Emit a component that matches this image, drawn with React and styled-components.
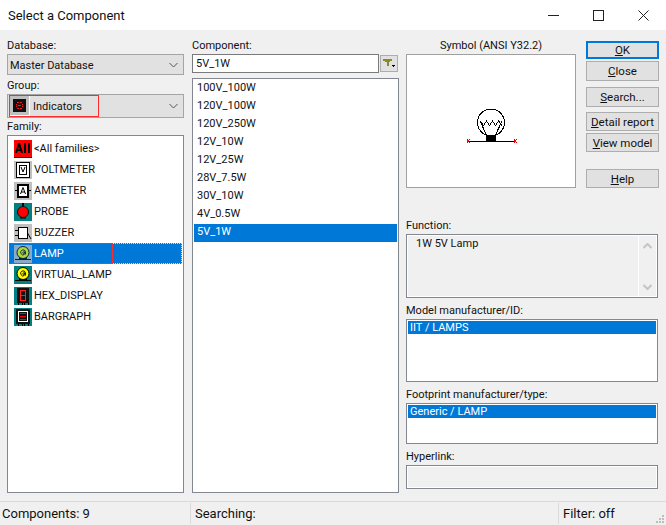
import React from 'react';
import styled, { createGlobalStyle } from 'styled-components';

const GlobalStyle = createGlobalStyle`
    html, body {
        margin: 0;
        padding: 0;
        background: #f0f0f0;
    }
    * {
        box-sizing: border-box;
    }
`;

const Dialog = styled.div`
    width: 666px;
    height: 525px;
    display: flex;
    flex-direction: column;
    overflow: hidden;
    background: #f0f0f0;
    color: #111;
    font-family: Roboto, "Liberation Sans", sans-serif;
    font-size: 11px;
`;

const TitleBar = styled.div`
    height: 30px;
    flex: none;
    display: flex;
    align-items: center;
    justify-content: space-between;
    background: #fff;
    padding-left: 8px;
    font-size: 13px;
`;

const WindowControls = styled.div`
    display: flex;
    height: 30px;
`;

const WindowControl = styled.div`
    width: 45px;
    display: flex;
    align-items: center;
    justify-content: center;
`;

const Body = styled.div`
    flex: 1;
    display: flex;
    padding: 8px 0 0 7px;
`;

const LeftColumn = styled.div`
    width: 177px;
    margin-right: 8px;
    display: flex;
    flex-direction: column;
    padding-bottom: 8px;
`;

const MiddleColumn = styled.div`
    width: 207px;
    margin-right: 7px;
    display: flex;
    flex-direction: column;
    padding-bottom: 8px;
`;

const RightColumn = styled.div`
    width: 253px;
    display: flex;
    flex-direction: column;
`;

const Label = styled.div`
    height: 14px;
    line-height: 16px;
    margin-top: ${(p) => p.$top || 0}px;
    margin-bottom: 2px;
    white-space: nowrap;
    text-align: ${(p) => (p.$center ? 'center' : 'left')};
`;

const Select = styled.div`
    position: relative;
    height: ${(p) => p.$height}px;
    display: flex;
    align-items: center;
    justify-content: space-between;
    flex: none;
    background: #e1e1e1;
    border: 1px solid #a5a5a5;
    padding: 0 5px 0 2px;
`;

const SelectValue = styled.div`
    display: flex;
    align-items: center;
    gap: 3px;
    padding-top: 1px;
`;

const GroupIcon = styled.div`
    width: 20px;
    height: 20px;
    margin-top: -1px;
    display: flex;
    border: 1px solid #fff;
    border-width: 0 1px 1px 0;
`;

const Highlight = styled.div`
    position: absolute;
    z-index: 1;
    left: ${(p) => p.$left}px;
    top: ${(p) => p.$top}px;
    width: ${(p) => p.$width}px;
    height: ${(p) => p.$height}px;
    border: 1px solid #ff2a2a;
    pointer-events: none;
`;

const ListBox = styled.div`
    position: relative;
    flex: 1;
    background: #fff;
    border: 1px solid #828790;
    padding: ${(p) => p.$padTop || 1}px 1px 1px;
`;

const FamilyRow = styled.div`
    position: relative;
    z-index: 0;
    height: 21px;
    display: flex;
    align-items: center;
    padding-left: 5px;
    gap: 2px;
    background: ${(p) => (p.$selected ? '#0078d7' : 'transparent')};
    color: ${(p) => (p.$selected ? '#fff' : '#111')};
    outline: ${(p) => (p.$selected ? '1px dotted #c8e0f4' : 'none')};
    outline-offset: -1px;
`;

const IconSlot = styled.div`
    width: 18px;
    height: 18px;
    flex: none;
    display: flex;
    opacity: ${(p) => (p.$selected ? 0.7 : 1)};
`;

const ComponentRow = styled.div`
    height: 18px;
    line-height: 16px;
    padding-left: 3px;
    background: ${(p) => (p.$selected ? '#0078d7' : 'transparent')};
    color: ${(p) => (p.$selected ? '#fff' : '#111')};
`;

const SearchRow = styled.div`
    display: flex;
    align-items: center;
    gap: 1px;
    height: 19px;
    margin-bottom: 5px;
`;

const SearchInput = styled.div`
    width: 187px;
    height: 19px;
    line-height: 17px;
    background: #fff;
    border: 1px solid #7a7a7a;
    padding-left: 3px;
`;

const FilterButton = styled.div`
    width: 18px;
    height: 17px;
    background: #e1e1e1;
    border: 1px solid #adadad;
    display: flex;
    align-items: center;
    justify-content: center;
`;

const TopRow = styled.div`
    display: flex;
    justify-content: space-between;
    height: 150px;
    margin-bottom: 30px;
`;

const SymbolColumn = styled.div`
    width: 170px;
    display: flex;
    flex-direction: column;
`;

const SymbolBox = styled.div`
    height: 134px;
    background: #fff;
    border: 1px solid #a0a0a0;
`;

const ButtonColumn = styled.div`
    width: 73px;
    margin-top: 3px;
    display: flex;
    flex-direction: column;
`;

const Button = styled.div`
    height: ${(p) => p.$height || 20}px;
    margin-top: ${(p) => p.$top || 0}px;
    display: flex;
    align-items: center;
    justify-content: center;
    flex: none;
    background: #e1e1e1;
    border: ${(p) => (p.$primary ? '2px solid #0078d7' : '1px solid #adadad')};
    white-space: nowrap;
    font-size: 11.5px;
    u {
        text-underline-offset: 1px;
    }
`;

const InfoBox = styled.div`
    width: 252px;
    height: ${(p) => p.$height}px;
    display: flex;
    flex: none;
    justify-content: space-between;
    background: #f0f0f0;
    border: 1px solid #828790;
    box-shadow: inset 0 0 0 1px #fff;
    padding: 2px 1px 1px 9px;
`;

const ScrollBar = styled.div`
    width: 18px;
    margin-top: -1px;
    display: flex;
    flex-direction: column;
    justify-content: space-between;
    align-items: center;
    border-left: 1px solid #fff;
    padding: 7px 0 6px;
`;

const SelectedLine = styled.div`
    height: 13px;
    line-height: 13px;
    padding-left: 2px;
    background: #0078d7;
    color: #fff;
`;

const DetailList = styled.div`
    width: 252px;
    height: ${(p) => p.$height}px;
    flex: none;
    background: #fff;
    border: 1px solid #828790;
    padding: 1px;
`;

const StatusBar = styled.div`
    position: relative;
    height: 24px;
    flex: none;
    display: flex;
    align-items: center;
    border-top: 1px solid #d9d9d9;
    font-size: 13px;
`;

const StatusCell = styled.div`
    width: ${(p) => p.$width}px;
    height: 21px;
    line-height: 21px;
    padding-left: ${(p) => p.$pad || 4}px;
    border-right: ${(p) => (p.$last ? 'none' : '1px solid #d9d9d9')};
`;

const Grip = styled.svg`
    position: absolute;
    right: 1px;
    bottom: 1px;
`;

const families = [
    { name: '<All families>', icon: 'all' },
    { name: 'VOLTMETER', icon: 'volt' },
    { name: 'AMMETER', icon: 'amm' },
    { name: 'PROBE', icon: 'probe' },
    { name: 'BUZZER', icon: 'buzzer' },
    { name: 'LAMP', icon: 'lamp', selected: true },
    { name: 'VIRTUAL_LAMP', icon: 'vlamp' },
    { name: 'HEX_DISPLAY', icon: 'hex' },
    { name: 'BARGRAPH', icon: 'bar' },
];

const components = ['100V_100W', '120V_100W', '120V_250W', '12V_10W', '12V_25W', '28V_7.5W', '30V_10W', '4V_0.5W', '5V_1W'];

const Chevron = ({ up, color = '#555' }) => (
    <svg width="9" height="6" viewBox="0 0 9 6">
        <polyline points={up ? '0.5,5 4.5,1 8.5,5' : '0.5,1 4.5,5 8.5,1'} fill="none" stroke={color} strokeWidth={color === '#555' ? 1 : 2} />
    </svg>
);

const FamilyIcon = ({ type }) => {
    const base = { width: 18, height: 18, viewBox: '0 0 18 18', shapeRendering: 'crispEdges' };
    if (type === 'all') {
        return (
            <svg {...base}>
                <rect width="18" height="17" fill="#ff0000" />
                <rect y="17" width="18" height="1" fill="#111" />
                <path d="M1 13 L4 3 H6 L9 13 H7 L6.3 11 H3.7 L3 13 Z M4.2 9.5 H5.8 L5 6.5 Z" fill="#000" fillRule="evenodd" shapeRendering="auto" />
                <rect x="10" y="3" width="2" height="10" fill="#000" />
                <rect x="14" y="3" width="2" height="10" fill="#000" />
            </svg>
        );
    }
    if (type === 'volt') {
        return (
            <svg {...base}>
                <rect width="18" height="18" fill="#c0c0c0" />
                <rect x="2.5" y="1.5" width="13" height="15" fill="#fff" stroke="#000" />
                <rect x="5.5" y="4.5" width="7" height="9" fill="#fff" stroke="#000" />
                <path d="M7 6 L9 11 L11 6" fill="none" stroke="#000" shapeRendering="auto" />
            </svg>
        );
    }
    if (type === 'amm') {
        return (
            <svg {...base}>
                <rect width="18" height="18" fill="#c0c0c0" />
                <rect x="1" y="8" width="16" height="1" fill="#000" />
                <rect x="4" y="3" width="10" height="12" fill="#fff" stroke="#000" strokeWidth="2" />
                <path d="M6.5 12 L9 5.5 L11.5 12 M7 10 H11" fill="none" stroke="#000" shapeRendering="auto" />
            </svg>
        );
    }
    if (type === 'probe') {
        return (
            <svg width="18" height="18" viewBox="0 0 18 18">
                <rect width="18" height="18" fill="#008080" />
                <rect x="8" y="0" width="2" height="4" fill="#000" />
                <circle cx="9" cy="9" r="5.5" fill="#ff0000" stroke="#111" />
                <path d="M6 15 H12" stroke="#000" />
            </svg>
        );
    }
    if (type === 'buzzer') {
        return (
            <svg {...base}>
                <rect width="18" height="18" fill="#c0c0c0" />
                <path d="M1 6.5 H4 M1 11.5 H4" stroke="#000" />
                <rect x="4.5" y="3.5" width="9" height="11" fill="#fff" stroke="#000" />
                <path d="M13.5 9 L17 15" stroke="#000" shapeRendering="auto" />
            </svg>
        );
    }
    if (type === 'lamp' || type === 'vlamp') {
        const bg = type === 'lamp' ? '#c0c0c0' : '#008080';
        return (
            <svg width="18" height="18" viewBox="0 0 18 18">
                <rect width="18" height="18" fill={bg} />
                <path d="M1 14.5 H17" stroke="#000" />
                <rect x="5" y="12" width="8" height="3" fill="#000" />
                <circle cx="9" cy="7.5" r="6" fill="#ffff00" stroke="#000" />
                <path d="M11.5 9.5 V6.5 A2.5 2.5 0 1 0 10.5 9.5 M10.5 6.5 V8.5 A1 1 0 1 1 10.4 7" fill="none" stroke="#000" strokeWidth="0.9" />
            </svg>
        );
    }
    if (type === 'hex') {
        return (
            <svg {...base}>
                <rect width="18" height="18" fill="#008080" />
                <rect x="3" y="1" width="12" height="15" fill="#111" />
                <rect x="6.5" y="3.5" width="5" height="10" fill="none" stroke="#ff2020" />
                <rect x="6" y="8" width="6" height="1" fill="#ff2020" />
                <path d="M4 16 V18 M8 16 V18 M10 16 V18 M14 16 V18" stroke="#000" />
            </svg>
        );
    }
    return (
        <svg {...base}>
            <rect width="18" height="18" fill="#008080" />
            <rect x="2" y="1" width="14" height="15" fill="#111" />
            <rect x="4" y="3" width="10" height="11" fill="#fff" />
            <rect x="5" y="4" width="8" height="9" fill="#111" />
            <rect x="6" y="5" width="6" height="1" fill="#ff0000" />
            <rect x="6" y="8" width="6" height="1" fill="#ff0000" />
            <rect x="6" y="11" width="6" height="1" fill="#ff0000" />
            <path d="M4 16 V18 M8 16 V18 M10 16 V18 M14 16 V18" stroke="#000" />
        </svg>
    );
};

const LampSymbol = () => (
    <svg width="168" height="132" viewBox="0 0 168 132" shapeRendering="crispEdges">
        <circle cx="84" cy="67.5" r="13.5" fill="none" stroke="#000" />
        <path d="M73 66 L76.5 70.5 L79.5 66 L82.5 70.5 L85.5 66 L88.5 70.5 L91.5 66 L95 70.5" fill="none" stroke="#000" />
        <path d="M73 66 L79.5 80 M95 66 L88.5 80" fill="none" stroke="#000" />
        <rect x="79" y="80" width="10" height="6" fill="#000" />
        <rect x="61" y="86" width="47" height="1" fill="#000" />
        <path d="M60 84.5 L62.5 88 M62.5 84.5 L60 88 M107 84.5 L109.5 88 M109.5 84.5 L107 88" stroke="#f00000" />
    </svg>
);

const App = () => {
    return (
        <Dialog>
            <GlobalStyle />
            <TitleBar>
                <span>Select a Component</span>
                <WindowControls>
                    <WindowControl>
                        <svg width="11" height="11" viewBox="0 0 11 11" shapeRendering="crispEdges"><rect y="5" width="11" height="1" fill="#222" /></svg>
                    </WindowControl>
                    <WindowControl>
                        <svg width="11" height="11" viewBox="0 0 11 11" shapeRendering="crispEdges"><rect x="0.5" y="0.5" width="10" height="10" fill="none" stroke="#222" /></svg>
                    </WindowControl>
                    <WindowControl>
                        <svg width="11" height="11" viewBox="0 0 11 11"><path d="M0.5 0.5 L10.5 10.5 M10.5 0.5 L0.5 10.5" stroke="#222" /></svg>
                    </WindowControl>
                </WindowControls>
            </TitleBar>
            <Body>
                <LeftColumn>
                    <Label>Database:</Label>
                    <Select $height={21}>
                        <SelectValue>Master Database</SelectValue>
                        <Chevron />
                    </Select>
                    <Label $top={3}>Group:</Label>
                    <Select $height={24}>
                        <SelectValue>
                            <GroupIcon>
                                <svg width="19" height="19" viewBox="0 0 19 19" shapeRendering="crispEdges">
                                    <rect width="19" height="19" fill="#c0c0c0" />
                                    <rect x="3" y="3" width="13" height="13" fill="#111" />
                                    <path d="M7 6 h2 v1 h-2 Z M10 6 h2 v1 h-2 Z M6 8 h1 v1 h-1 Z M12 8 h1 v1 h-1 Z M8 9 h3 v1 h-3 Z M6 10 h1 v1 h-1 Z M12 10 h1 v1 h-1 Z M7 12 h2 v1 h-2 Z M10 12 h2 v1 h-2 Z" fill="#f02020" />
                                </svg>
                            </GroupIcon>
                            <span>Indicators</span>
                        </SelectValue>
                        <Chevron />
                        <Highlight $left={1} $top={0} $width={90} $height={22} />
                    </Select>
                    <Label $top={1}>Family:</Label>
                    <ListBox $padTop={2}>
                        {families.map((family) => (
                            <FamilyRow key={family.name} $selected={family.selected}>
                                <IconSlot $selected={family.selected}><FamilyIcon type={family.icon} /></IconSlot>
                                <span>{family.name}</span>
                            </FamilyRow>
                        ))}
                        <Highlight $left={1} $top={107} $width={104} $height={21} />
                    </ListBox>
                </LeftColumn>
                <MiddleColumn>
                    <Label>Component:</Label>
                    <SearchRow>
                        <SearchInput>5V_1W</SearchInput>
                        <FilterButton>
                            <svg width="12" height="9" viewBox="0 0 12 9" shapeRendering="crispEdges">
                                <path d="M0 0 H9 V2 H7 V3 H6 V7 H4 V3 H2 V2 H0 Z" fill="#8a8a2a" />
                                <path d="M8 6 H12 L10 8 Z" fill="#000" />
                            </svg>
                        </FilterButton>
                    </SearchRow>
                    <ListBox>
                        {components.map((name) => (
                            <ComponentRow key={name} $selected={name === '5V_1W'}>{name}</ComponentRow>
                        ))}
                    </ListBox>
                </MiddleColumn>
                <RightColumn>
                    <TopRow>
                        <SymbolColumn>
                            <Label $center>Symbol (ANSI Y32.2)</Label>
                            <SymbolBox><LampSymbol /></SymbolBox>
                        </SymbolColumn>
                        <ButtonColumn>
                            <Button $primary $height={18}><span><u>O</u>K</span></Button>
                            <Button $top={2}><span><u>C</u>lose</span></Button>
                            <Button $top={6}><span><u>S</u>earch...</span></Button>
                            <Button $top={5} $height={19}><span><u>D</u>etail report</span></Button>
                            <Button $top={2} $height={19}><span><u>V</u>iew model</span></Button>
                            <Button $top={17} $height={19}><span><u>H</u>elp</span></Button>
                        </ButtonColumn>
                    </TopRow>
                    <Label>Function:</Label>
                    <InfoBox $height={64}>
                        <span>1W 5V Lamp</span>
                        <ScrollBar>
                            <Chevron up color="#c4c4c4" />
                            <Chevron color="#c4c4c4" />
                        </ScrollBar>
                    </InfoBox>
                    <Label $top={5}>Model manufacturer/ID:</Label>
                    <DetailList $height={63}><SelectedLine>IIT / LAMPS</SelectedLine></DetailList>
                    <Label $top={5}>Footprint manufacturer/type:</Label>
                    <DetailList $height={41}><SelectedLine>Generic / LAMP</SelectedLine></DetailList>
                    <Label $top={5}>Hyperlink:</Label>
                    <InfoBox $height={24} />
                </RightColumn>
            </Body>
            <StatusBar>
                <StatusCell $width={191} $pad={2}>Components: 9</StatusCell>
                <StatusCell $width={368}>Searching:</StatusCell>
                <StatusCell $width={107} $last>Filter: off</StatusCell>
                <Grip width="10" height="10" viewBox="0 0 10 10" shapeRendering="crispEdges">
                    <path d="M7 1 h2 v2 h-2 Z M4 4 h2 v2 h-2 Z M7 4 h2 v2 h-2 Z M1 7 h2 v2 h-2 Z M4 7 h2 v2 h-2 Z M7 7 h2 v2 h-2 Z" fill="#bdbdbd" />
                </Grip>
            </StatusBar>
        </Dialog>
    );
};

export default App;
